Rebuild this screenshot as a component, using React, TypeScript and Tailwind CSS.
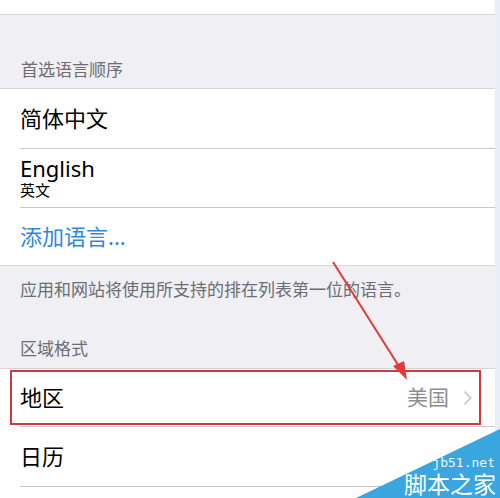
import React from 'react'

const font = { fontFamily: '"Noto Sans", "Noto Sans CJK SC", sans-serif' }

const Row = (props: { children: React.ReactNode, h: string, last?: boolean }) => {
    const { children, h, last } = props
    return (
        <div className={`shrink-0 bg-white pl-5 ${h}`}>
            <div className={`h-full flex items-center pr-5 ${last ? '' : 'border-b border-[#c8c7cc]'}`}>
                {children}
            </div>
        </div>
    )
}

export default function App() {
    return (
        <div className="relative w-[500px] h-[498px] overflow-hidden bg-white flex" style={font}>
            <div className="w-[495px] flex flex-col bg-[#efeff4] overflow-hidden">
                {/* top cell remnant */}
                <div className="shrink-0 h-[15px] bg-white border-b border-[#d6d5da]" />

                <div className="shrink-0 h-[73px] flex items-end pl-[21px] pb-[6px] text-[17px] text-[#6d6d72]">首选语言顺序</div>

                <div className="shrink-0 border-t border-[#d6d5da]">
                    <Row h="h-[60px]">
                        <span className="text-[22px] text-black">简体中文</span>
                    </Row>
                    <Row h="h-[59px]">
                        <div className="flex flex-col -mt-[2px]">
                            <span className="text-[22px] text-black leading-[24px]">English</span>
                            <span className="text-[15px] text-black leading-[18px] mt-[1px]">英文</span>
                        </div>
                    </Row>
                    <div className="h-[58px] bg-white pl-5 flex items-center border-b border-[#d6d5da]">
                        <span className="text-[22px] text-[#2f87e0]">添加语言...</span>
                    </div>
                </div>

                <div className="shrink-0 h-[102px] flex flex-col pl-5">
                    <div className="mt-[11px] text-[17px] text-[#6d6d72]">应用和网站将使用所支持的排在列表第一位的语言。</div>
                    <div className="mt-auto mb-[7px] text-[17px] text-[#6d6d72]">区域格式</div>
                </div>

                <div className="shrink-0 border-t border-[#d6d5da]">
                    <Row h="h-[58px]">
                        <span className="text-[22px] text-black">地区</span>
                        <span className="ml-auto text-[21px] text-[#8e8e93]">美国</span>
                        <svg width="9" height="16" viewBox="0 0 9 16" className="ml-[14px] mr-[3px]">
                            <path d="M1.5 1.5 L7.5 8 L1.5 14.5" fill="none" stroke="#c7c7cc" strokeWidth="1.8" />
                        </svg>
                    </Row>
                    <Row h="h-[60px]">
                        <span className="text-[22px] text-black">日历</span>
                    </Row>
                    <div className="h-[20px] bg-white" />
                </div>
            </div>
            <div className="w-[5px] bg-[#e8eef5]" />

            {/* red highlight box */}
            <div className="absolute left-[10px] top-[370px] w-[471px] h-[55px] border-2 border-[#d0393e]" />

            {/* red arrow */}
            <svg className="absolute left-0 top-0" width="500" height="498" viewBox="0 0 500 498">
                <line x1="333" y1="262" x2="400" y2="368" stroke="#e03a3a" strokeWidth="2" />
                <polygon points="407,380 393,366 404,361" fill="#e03a3a" />
            </svg>

            {/* watermark */}
            <svg className="absolute left-0 top-0" width="500" height="498" viewBox="0 0 500 498">
                <polygon points="356,498 500,429 500,498" fill="#3aa6df" />
            </svg>
            <div className="absolute right-[5px] top-[456px] text-[13px] leading-none text-white/90" style={{ fontFamily: '"DejaVu Sans Mono", monospace' }}>jb51.net</div>
            <div className="absolute right-[4px] top-[471px] text-[23px] leading-[24px] text-white" style={{ fontFamily: '"Noto Sans CJK SC", sans-serif' }}>脚本之家</div>
        </div>
    )
}
